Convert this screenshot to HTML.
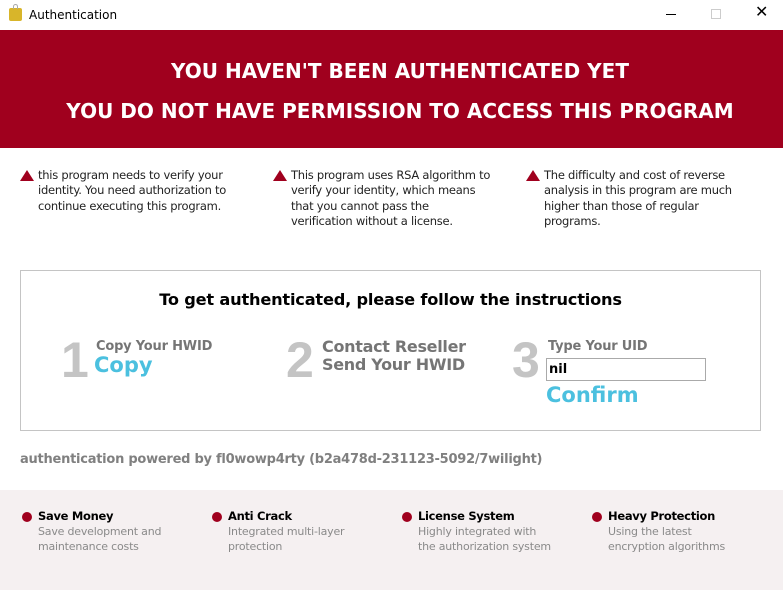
<!DOCTYPE html><html><head><style>
*{margin:0;padding:0;box-sizing:border-box}
body{width:783px;height:590px;background:#fff;font-family:Tahoma,"DejaVu Sans","Liberation Sans",sans-serif;position:relative;overflow:hidden}
.a{position:absolute;white-space:nowrap}
.tb{top:0;left:0;width:783px;height:30px;font-size:12px;color:#000}
.red{top:30px;left:0;width:783px;height:118px;background:#a0001e;color:#fff;font-weight:bold;font-size:20px;text-align:center}
.w{font-size:11.5px;letter-spacing:-0.25px;color:#222;line-height:15.4px;white-space:normal}
.tri{width:0;height:0;border-left:7px solid transparent;border-right:7px solid transparent;border-bottom:11px solid #a0001e}
.box{left:20px;top:270px;width:741px;height:161px;border:1px solid #c4c4c4}
.num{font-size:50px;font-weight:bold;color:#c4c4c4;font-family:"Liberation Sans",sans-serif;letter-spacing:-1px}
.g{color:#757575;font-weight:bold}
.bl{color:#4bc0df;font-weight:bold;font-size:21px}
.bot{left:0;top:490px;width:783px;height:100px;background:#f5f0f1}
.dot{width:10px;height:10px;border-radius:50%;background:#a0001e}
.ft{font-size:11.5px;font-weight:bold;color:#000;letter-spacing:-0.3px}
.fd{font-size:11px;letter-spacing:-0.2px;color:#8a8a8a;line-height:15px}
</style></head><body>
<div class="a tb">
<div class="a" style="left:9px;top:8px;width:13px;height:13px;background:#d8b52a;border-radius:2px"></div>
<div class="a" style="left:13px;top:4px;width:5px;height:5px;border:1.5px solid #aaa;border-bottom:none;border-radius:3px 3px 0 0"></div>
<div class="a" style="left:29px;top:8px">Authentication</div>
<div class="a" style="left:666px;top:14px;width:10px;height:1px;background:#000"></div>
<div class="a" style="left:711px;top:9px;width:10px;height:10px;border:1px solid #ccc"></div>
<div class="a" style="left:755px;top:2px;font-size:16px;color:#000">✕</div>
</div>
<div class="a red">
<div class="a" style="left:0;width:800px;top:29px">YOU HAVEN'T BEEN AUTHENTICATED YET</div>
<div class="a" style="left:0;width:800px;top:69px">YOU DO NOT HAVE PERMISSION TO ACCESS THIS PROGRAM</div>
</div>
<div class="a tri" style="left:20px;top:170px"></div>
<div class="a w" style="left:38px;top:168px;width:215px">this program needs to verify your identity. You need authorization to continue executing this program.</div>
<div class="a tri" style="left:273px;top:170px"></div>
<div class="a w" style="left:291px;top:168px;width:215px">This program uses RSA algorithm to<br>verify your identity, which means<br>that you cannot pass the<br>verification without a license.</div>
<div class="a tri" style="left:526px;top:170px"></div>
<div class="a w" style="left:544px;top:168px;width:200px">The difficulty and cost of reverse analysis in this program are much higher than those of regular programs.</div>
<div class="a box"></div>
<div class="a" style="left:0;width:781px;text-align:center;top:290px;font-size:16.2px;font-weight:bold;color:#000;letter-spacing:-0.2px">To get authenticated, please follow the instructions</div>
<div class="a num" style="left:61px;top:331px">1</div>
<div class="a g" style="left:96px;top:339px;font-size:13px;letter-spacing:-0.2px">Copy Your HWID</div>
<div class="a bl" style="left:94px;top:353px">Copy</div>
<div class="a num" style="left:286px;top:331px">2</div>
<div class="a g" style="left:322px;top:338px;font-size:16px;line-height:18px;letter-spacing:-0.3px">Contact Reseller<br>Send Your HWID</div>
<div class="a num" style="left:512px;top:331px">3</div>
<div class="a g" style="left:548px;top:339px;font-size:13px;letter-spacing:-0.2px">Type Your UID</div>
<div class="a" style="left:546px;top:358px;width:160px;height:23px;border:1px solid #aaa;font-size:13px;font-weight:bold;padding:3px 2px">nil</div>
<div class="a bl" style="left:546px;top:383px">Confirm</div>
<div class="a" style="left:20px;top:452px;font-size:13px;letter-spacing:-0.25px;font-weight:bold;color:#808080">authentication powered by fl0wowp4rty (b2a478d-231123-5092/7wilight)</div>
<div class="a bot"></div>
<div class="a dot" style="left:22px;top:512px"></div><div class="a ft" style="left:38px;top:509px">Save Money</div><div class="a fd" style="left:38px;top:524px">Save development and<br>maintenance costs</div>
<div class="a dot" style="left:212px;top:512px"></div><div class="a ft" style="left:228px;top:509px">Anti Crack</div><div class="a fd" style="left:228px;top:524px">Integrated multi-layer<br>protection</div>
<div class="a dot" style="left:402px;top:512px"></div><div class="a ft" style="left:418px;top:509px">License System</div><div class="a fd" style="left:418px;top:524px">Highly integrated with<br>the authorization system</div>
<div class="a dot" style="left:592px;top:512px"></div><div class="a ft" style="left:608px;top:509px">Heavy Protection</div><div class="a fd" style="left:608px;top:524px">Using the latest<br>encryption algorithms</div>
</body></html>
